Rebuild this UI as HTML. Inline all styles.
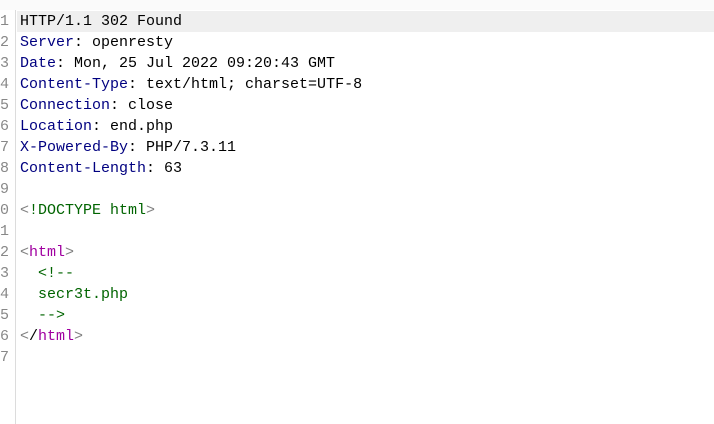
<!DOCTYPE html>
<html><head><style>
body{margin:0;width:714px;height:424px;background:#fff;overflow:hidden;position:relative;font-family:"Liberation Mono","Noto Sans CJK SC",monospace;font-size:15px}
.top{position:absolute;left:0;top:0;width:714px;height:10px;background:#fafafa}
.gut{position:absolute;left:15px;top:10px;width:1px;height:414px;background:#dcdcdc}
.hl{position:absolute;left:17px;top:11px;width:697px;height:21px;background:#efefef}
.l{position:absolute;left:0;height:21px;line-height:21px;white-space:pre;color:#000}
.n{display:inline-block;width:11px;color:#888;text-align:left}
.t{position:absolute;left:20px;top:0}
.k{color:#000080}.g{color:#808080}.p{color:#a000a0}.c{color:#006400}
</style></head><body>
<div class="top"></div><div class="gut"></div><div class="hl"></div>
<div class="l" style="top:11px"><span class="n">1</span><span class="t">HTTP/1.1 302 Found</span></div>
<div class="l" style="top:32px"><span class="n">2</span><span class="t"><span class="k">Server</span>: openresty</span></div>
<div class="l" style="top:53px"><span class="n">3</span><span class="t"><span class="k">Date</span>: Mon, 25 Jul 2022 09:20:43 GMT</span></div>
<div class="l" style="top:74px"><span class="n">4</span><span class="t"><span class="k">Content-Type</span>: text/html; charset=UTF-8</span></div>
<div class="l" style="top:95px"><span class="n">5</span><span class="t"><span class="k">Connection</span>: close</span></div>
<div class="l" style="top:116px"><span class="n">6</span><span class="t"><span class="k">Location</span>: end.php</span></div>
<div class="l" style="top:137px"><span class="n">7</span><span class="t"><span class="k">X-Powered-By</span>: PHP/7.3.11</span></div>
<div class="l" style="top:158px"><span class="n">8</span><span class="t"><span class="k">Content-Length</span>: 63</span></div>
<div class="l" style="top:179px"><span class="n">9</span></div>
<div class="l" style="top:200px"><span class="n">0</span><span class="t"><span class="g">&lt;</span><span class="c">!DOCTYPE html</span><span class="g">&gt;</span></span></div>
<div class="l" style="top:221px"><span class="n">1</span></div>
<div class="l" style="top:242px"><span class="n">2</span><span class="t"><span class="g">&lt;</span><span class="p">html</span><span class="g">&gt;</span></span></div>
<div class="l" style="top:263px"><span class="n">3</span><span class="t">  <span class="c">&lt;!--</span></span></div>
<div class="l" style="top:284px"><span class="n">4</span><span class="t">  <span class="c">secr3t.php</span></span></div>
<div class="l" style="top:305px"><span class="n">5</span><span class="t">  <span class="c">--&gt;</span></span></div>
<div class="l" style="top:326px"><span class="n">6</span><span class="t"><span class="g">&lt;</span>/<span class="p">html</span><span class="g">&gt;</span></span></div>
<div class="l" style="top:347px"><span class="n">7</span></div>
</body></html>
